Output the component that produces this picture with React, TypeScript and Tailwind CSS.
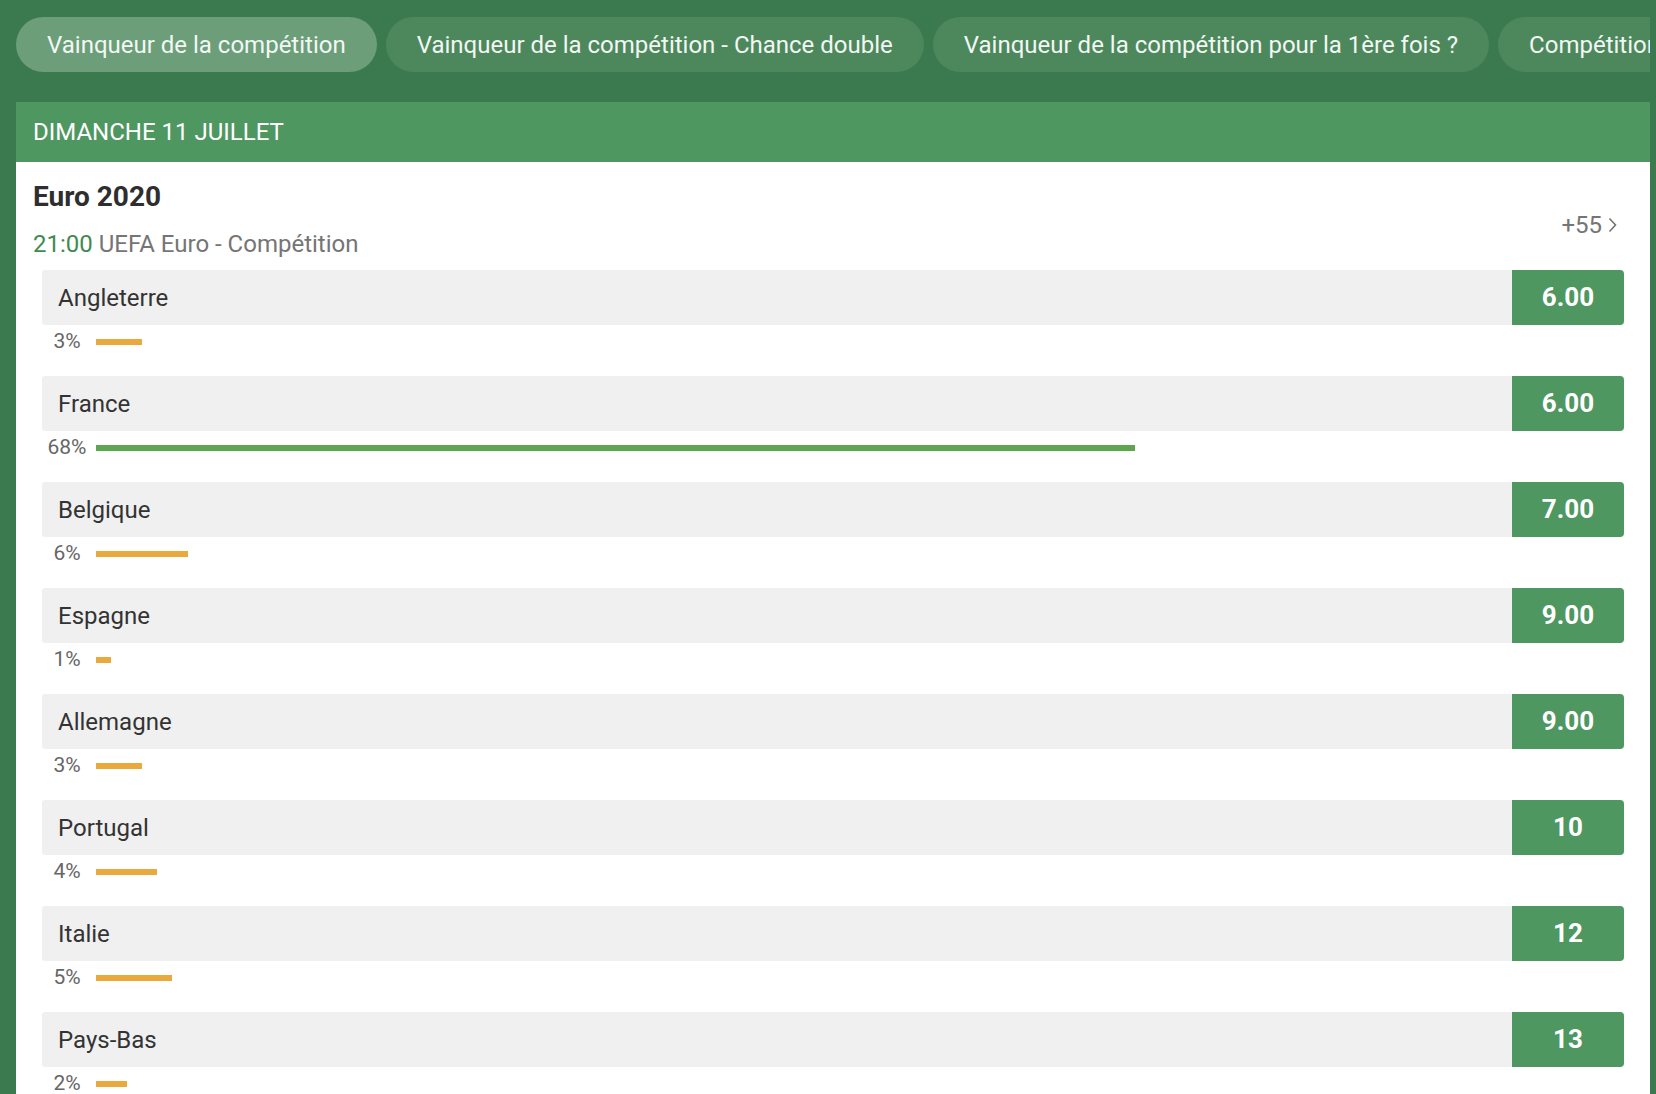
interface teamType {
  name: string,
  odds: string,
  pct: number
}

const tabs = [
  "Vainqueur de la compétition",
  "Vainqueur de la compétition - Chance double",
  "Vainqueur de la compétition pour la 1ère fois ?",
  "Compétition - Meilleur buteur",
];

const teams: teamType[] = [
  { name: "Angleterre", odds: "6.00", pct: 3 },
  { name: "France", odds: "6.00", pct: 68 },
  { name: "Belgique", odds: "7.00", pct: 6 },
  { name: "Espagne", odds: "9.00", pct: 1 },
  { name: "Allemagne", odds: "9.00", pct: 3 },
  { name: "Portugal", odds: "10", pct: 4 },
  { name: "Italie", odds: "12", pct: 5 },
  { name: "Pays-Bas", odds: "13", pct: 2 },
];

function TeamRow({ team }: { team: teamType }) {
  const top = team.pct >= 50;
  return (
    <div className="mb-[17px]">
      <div className="flex h-[55px]">
        <div className="flex flex-1 items-center rounded-l-[3px] bg-[#f0f0f0] pl-4 text-[24px] text-[#333]">
          {team.name}
        </div>
        <button className="w-[112px] rounded-r-[4px] bg-[#4f9761] text-[26px] font-bold text-white">
          {team.odds}
        </button>
      </div>
      <div className="flex h-[34px] items-center">
        <span className="w-[50px] text-center text-[21px] text-[#666]">{team.pct}%</span>
        <div className="ml-[4px] flex-1">
          <div
            className={top ? "h-[6px] bg-[#5ea54f]" : "h-[6px] bg-[#eaa93c]"}
            style={{ width: team.pct + "%" }}
          />
        </div>
      </div>
    </div>
  );
}

function App() {
  return (
    <div className="h-[1094px] w-[1656px] overflow-hidden bg-[#3b7a4e] pl-4 pt-[17px] font-[Roboto,sans-serif]">
      <div className="flex w-[1634px] gap-[9px] overflow-hidden">
        {tabs.map((tab, index) => (
          <div
            key={index}
            className={
              index === 0
                ? "flex h-[55px] shrink-0 items-center rounded-full bg-[#6b9e79] px-[31px] text-[24px] text-[#f3f7f4]"
                : "flex h-[55px] shrink-0 items-center rounded-full bg-[#4c885c] px-[31px] text-[24px] text-[#f3f7f4]"
            }
          >
            {tab}
          </div>
        ))}
      </div>

      <div className="mt-[30px] w-[1634px] bg-white">
        <div className="flex h-[60px] items-center bg-[#4f9761] px-[17px] text-[24px] uppercase text-white">
          Dimanche 11 juillet
        </div>

        <div className="px-[17px] pt-4">
          <div className="flex justify-between">
            <div>
              <h2 className="h-[38px] text-[28px] font-bold leading-[38px] text-[#2e2e2e]">Euro 2020</h2>
              <p className="mt-3 text-[24px] leading-[32px] text-[#757575]">
                <span className="text-[#3f8a50]">21:00</span> UEFA Euro - Compétition
              </p>
            </div>
            <div className="mr-[16px] mt-[12px] flex items-center self-center text-[24px] text-[#757575]">
              +55
              <svg width="9" height="16" viewBox="0 0 9 16" className="ml-[6px]">
                <path d="M1.5 1.5 L7.5 8 L1.5 14.5" fill="none" stroke="#757575" strokeWidth="1.6" />
              </svg>
            </div>
          </div>

          <div className="mt-[10px] px-[9px]">
            {teams.map((team, index) => (
              <TeamRow key={index} team={team} />
            ))}
          </div>
        </div>
      </div>
    </div>
  );
}

export default App;
